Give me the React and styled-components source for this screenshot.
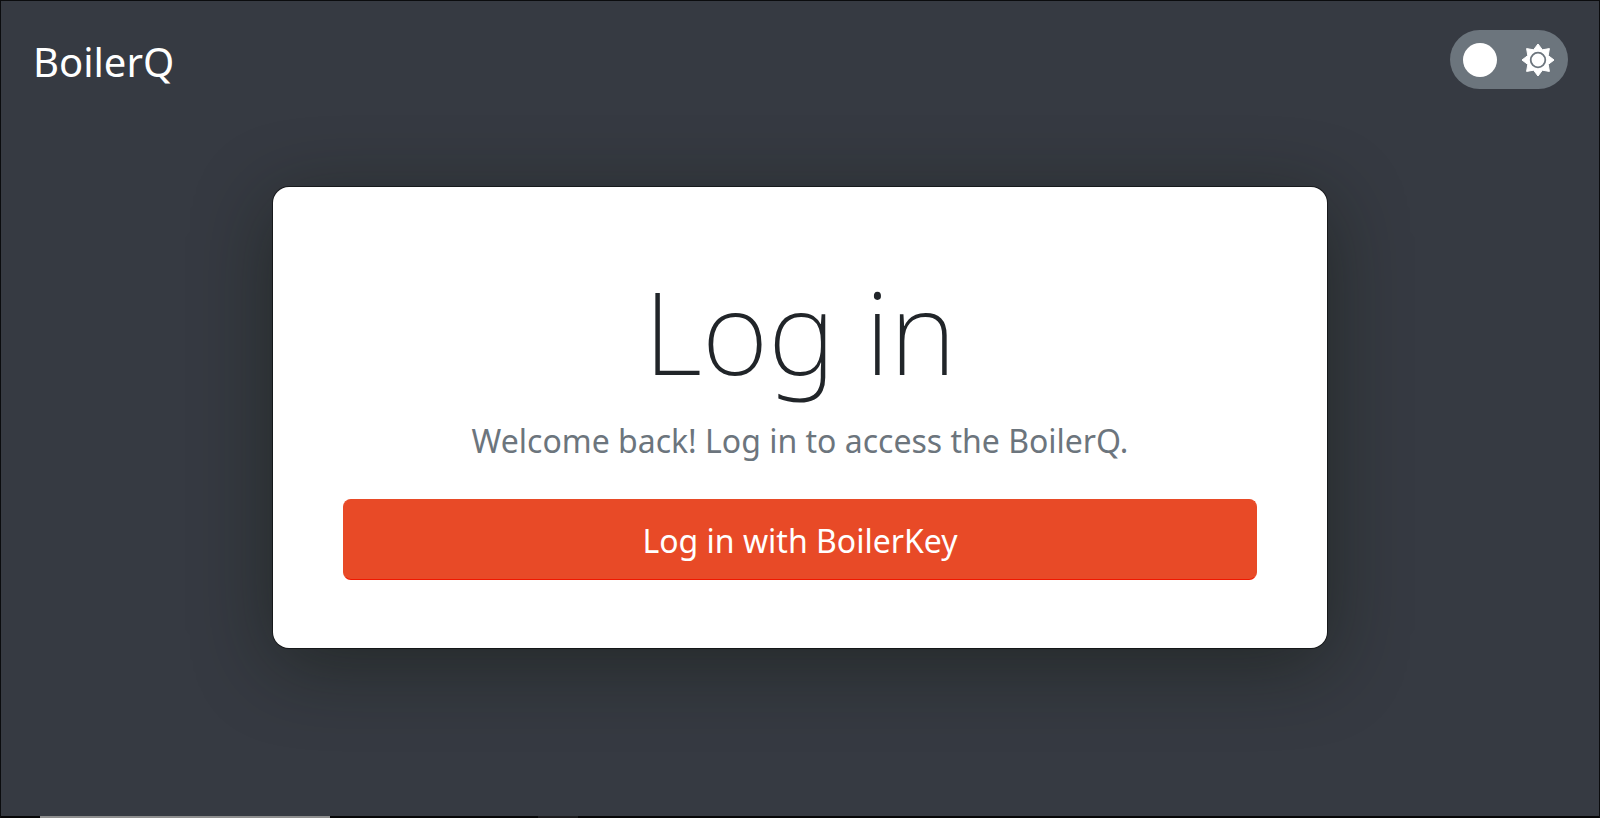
import React, { useState } from "react";
import styled, { createGlobalStyle } from "styled-components";

const GlobalStyle = createGlobalStyle`
    * {
        box-sizing: border-box;
    }

    body {
        margin: 0;
        background-color: #363a42;
        font-family: "Segoe UI", "Noto Sans", "Open Sans", sans-serif;
    }
`;

const Page = styled.div`
    display: flex;
    flex-direction: column;
    min-height: 100vh;
    border: 1px solid #0b0c0e;
    border-bottom: none;
    background-color: #363a42;
`;

const Header = styled.header`
    display: flex;
    align-items: flex-start;
    justify-content: space-between;
    padding: 29px 31px 0 32px;
`;

const Brand = styled.a`
    color: #fff;
    font-size: 40px;
    line-height: 64px;
    text-decoration: none;
`;

const ThemeToggle = styled.button`
    display: flex;
    align-items: center;
    justify-content: space-between;
    width: 118px;
    height: 59px;
    padding: 0 13px;
    border: none;
    border-radius: 30px;
    background-color: #6c757d;
    color: #fff;
    cursor: pointer;
`;

const Knob = styled.span`
    width: 34px;
    height: 34px;
    border-radius: 50%;
    background-color: #fff;
    order: ${({ $right }) => ($right ? 1 : 0)};
`;

const Main = styled.main`
    flex: 1;
    display: flex;
    justify-content: center;
    align-items: flex-start;
    padding: 93px 24px;
`;

const Card = styled.section`
    width: 68%;
    padding: 68px 70px;
    border-radius: 16px;
    background-color: #fff;
    box-shadow:
        0 0 0 1px rgba(0, 0, 0, 0.5),
        0 16px 80px rgba(14, 20, 8, 0.45);
    text-align: center;
`;

const Title = styled.h1`
    margin: 0;
    color: #212529;
    font-size: 114px;
    font-weight: 250;
    line-height: 152px;
`;

const Lead = styled.p`
    margin: 8px 0 32px;
    color: #6c757d;
    font-size: 32px;
    line-height: 52px;
`;

const LoginButton = styled.button`
    display: block;
    width: 100%;
    height: 81px;
    padding: 2px 16px 0;
    border: 1px solid #e84a27;
    border-bottom-color: #f01800;
    border-radius: 8px;
    background-color: #e84a27;
    color: #fff;
    font-family: inherit;
    font-size: 32px;
    line-height: 48px;
    cursor: pointer;
`;

const Footer = styled.footer`
    display: grid;
    grid-template-columns: 39px 290px 208px 40px 1fr;
    height: 2px;
    background-color: #060607;
`;

const FooterBar = styled.span`
    grid-column: ${({ $column }) => $column};
    background-color: ${({ $color }) => $color};
`;

const SunIcon = () => (
    <svg width="34" height="34" viewBox="0 0 34 34" fill="currentColor" aria-hidden="true">
        <path
            d="M17 1l4.4 5.8 7-1.2-1.2 7L33 17l-5.8 4.4 1.2 7-7-1.2L17 33l-4.4-5.8-7 1.2 1.2-7L1 17l5.8-4.4-1.2-7 7 1.2z"
            stroke="currentColor"
            strokeWidth="1"
            strokeLinejoin="round"
        />
        <circle cx="17" cy="17" r="7.3" fill="none" stroke="#6c757d" strokeWidth="1.8" />
    </svg>
);

function App() {
    const [dark, setDark] = useState(false);

    return (
        <>
            <GlobalStyle />
            <Page>
                <Header>
                    <Brand href="/">BoilerQ</Brand>
                    <ThemeToggle
                        type="button"
                        aria-label="Toggle theme"
                        aria-pressed={dark}
                        onClick={() => setDark(!dark)}
                    >
                        <Knob $right={dark} />
                        <SunIcon />
                    </ThemeToggle>
                </Header>
                <Main>
                    <Card>
                        <Title>Log in</Title>
                        <Lead>Welcome back! Log in to access the BoilerQ.</Lead>
                        <LoginButton type="button">Log in with BoilerKey</LoginButton>
                    </Card>
                </Main>
                <Footer>
                    <FooterBar $column={2} $color="#8f8f8f" />
                    <FooterBar $column={4} $color="#1c1c1e" />
                </Footer>
            </Page>
        </>
    );
}

export default App;
